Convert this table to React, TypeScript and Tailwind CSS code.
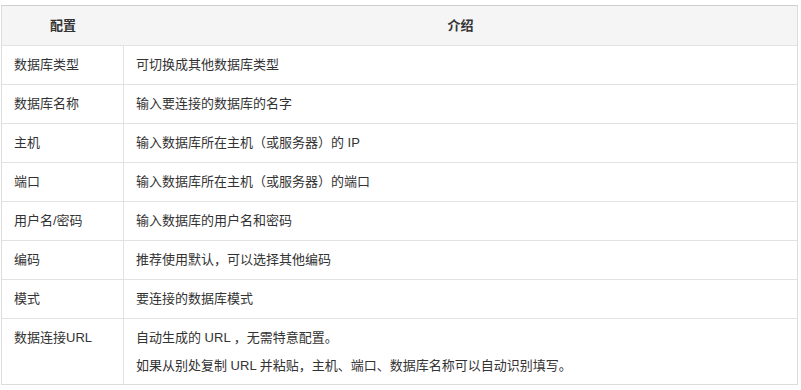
const rows: { name: string; desc: string[] }[] = [
  { name: "数据库类型", desc: ["可切换成其他数据库类型"] },
  { name: "数据库名称", desc: ["输入要连接的数据库的名字"] },
  { name: "主机", desc: ["输入数据库所在主机（或服务器）的 IP"] },
  { name: "端口", desc: ["输入数据库所在主机（或服务器）的端口"] },
  { name: "用户名/密码", desc: ["输入数据库的用户名和密码"] },
  { name: "编码", desc: ["推荐使用默认，可以选择其他编码"] },
  { name: "模式", desc: ["要连接的数据库模式"] },
  {
    name: "数据连接URL",
    desc: [
      "自动生成的 URL ，无需特意配置。",
      "如果从别处复制 URL 并粘贴，主机、端口、数据库名称可以自动识别填写。",
    ],
  },
];

export default function App() {
  return (
    <div
      className="min-h-screen bg-white pt-[5px] pl-[1px] text-[13px] text-[#333]"
      style={{ fontFamily: '"Liberation Sans", "Noto Sans CJK SC", sans-serif' }}
    >
      <div className="w-[797px] border border-[#dcdcdc] border-t-[#cfcfcf]">
        <div className="grid grid-cols-[122px_1fr] h-[39px] bg-[#f5f5f5] font-bold text-[#333]">
          <div className="flex items-center justify-center">配置</div>
          <div className="flex items-center justify-center">介绍</div>
        </div>
        {rows.map((r) => {
          const multi = r.desc.length > 1;
          return (
            <div
              key={r.name}
              className="grid grid-cols-[122px_1fr] border-t border-[#e2e2e2]"
            >
              <div
                className={
                  multi
                    ? "flex items-start border-r border-[#e2e2e2] pl-[12px] pt-[10px] leading-[18px]"
                    : "flex items-center border-r border-[#e2e2e2] pl-[12px] min-h-[38px] leading-[18px]"
                }
              >
                {r.name}
              </div>
              <div
                className={
                  multi
                    ? "flex flex-col pl-[12px] pt-[10px] pb-[9px] gap-[10px]"
                    : "flex flex-col justify-center pl-[12px]"
                }
              >
                {r.desc.map((d) => (
                  <p key={d} className="leading-[18px]">{d}</p>
                ))}
              </div>
            </div>
          );
        })}
      </div>
    </div>
  );
}
